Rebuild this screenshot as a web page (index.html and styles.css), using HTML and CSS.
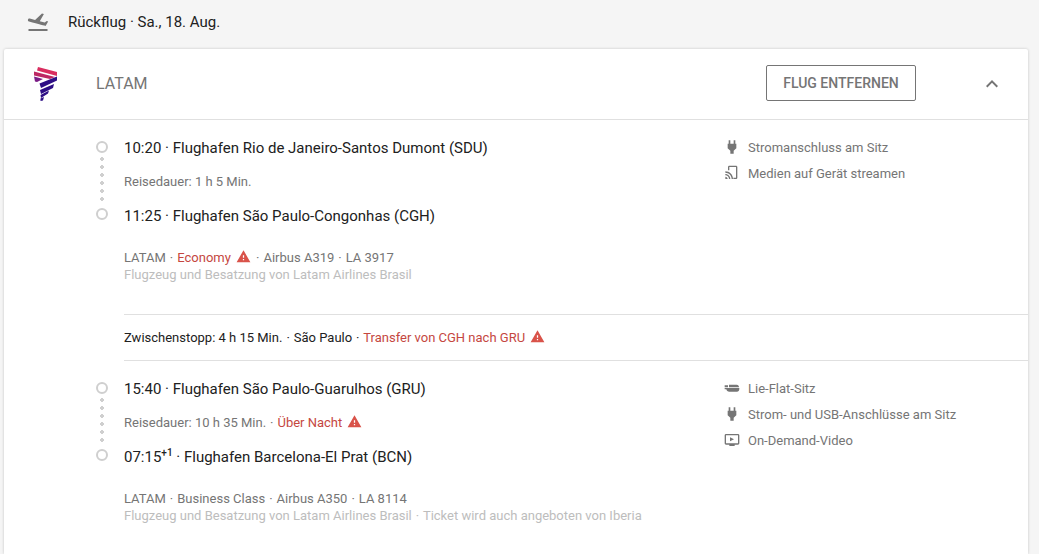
FILE: index.html
```html
<!DOCTYPE html>
<html lang="de">
<head>
    <meta charset="UTF-8">
    <meta name="viewport" content="width=device-width, initial-scale=1.0">
    <title>Rückflug</title>
    <link rel="stylesheet" href="styles.css">
</head>
<body>
    <div class="trip-head">
        <svg class="trip-icon" viewBox="0 0 24 24"><path d="M2.500 19h19v2h-19zM22.070 9.640c-.21-.8-1.040-1.280-1.840-1.060L14.920 10l-6.900-6.430-1.930.51 4.140 7.170-4.970 1.330-1.970-1.540-1.450.39 2.590 4.490s7.120-1.900 16.570-4.430c.81-.23 1.280-1.050 1.070-1.850z"/></svg>
        <span>Rückflug · Sa., 18. Aug.</span>
    </div>

    <div class="card">
        <div class="card-head">
            <svg class="logo" viewBox="0 0 23 34">
                <polygon fill="#d92d5f" points="4,0 23,5 23,9 3,3.500"/>
                <polygon fill="#bd2763" points="0,4.500 21,10 16,12 0,8.500"/>
                <polygon fill="#7a1c86" points="0,9.500 9,12 3,15 1,14.500"/>
                <polygon fill="#2d0e85" points="23,9.500 23,13.500 7,21 5.500,16.500"/>
                <polygon fill="#2d0e85" points="20,17 19,21 7,27 6,23"/>
                <polygon fill="#2d0e85" points="15,23.500 14,26.500 7,31 6.500,28"/>
                <polygon fill="#2d0e85" points="10,30 9,33.500 6.500,34 6.500,31.500"/>
            </svg>
            <span class="airline">LATAM</span>
            <button class="remove-btn">FLUG ENTFERNEN</button>
            <svg class="chevron" viewBox="0 0 24 24"><path d="M7.410 15.410 12 10.830l4.590 4.580L18 14l-6-6-6 6z"/></svg>
        </div>

        <div class="segment">
            <div class="timeline">
                <span class="stop"></span>
                <span class="dots"></span>
                <span class="stop"></span>
            </div>
            <div class="details">
                <div class="time-row">10:20 · Flughafen Rio de Janeiro-Santos Dumont (SDU)</div>
                <div class="duration-row">Reisedauer: 1 h 5 Min.</div>
                <div class="time-row">11:25 · Flughafen São Paulo-Congonhas (CGH)</div>
                <div class="info">
                    <div class="info-line">LATAM <span class="sep">·</span> <span class="warn">Economy</span> <svg class="warn-icon" viewBox="0 0 24 24"><path d="M1 21h22L12 2 1 21zm12-3h-2v-2h2v2zm0-4h-2v-4h2v4z"/></svg> <span class="sep">·</span> Airbus A319 <span class="sep">·</span> LA 3917</div>
                    <div class="info-line muted">Flugzeug und Besatzung von Latam Airlines Brasil</div>
                </div>
            </div>
            <ul class="amenities">
                <li>
                    <svg viewBox="0 0 24 24"><path d="M9.500 2v5h5V2h2.500v5h1.500v7l-4 3.500V22h-5v-4.500l-4-3.500V7H7V2z"/></svg>
                    Stromanschluss am Sitz
                </li>
                <li>
                    <svg viewBox="0 0 24 24"><path d="M2 17.500V21h3.500c0-2-1.500-3.500-3.500-3.500zm0-4v2c3 0 5.500 2.500 5.500 5.500h2c0-4.100-3.400-7.500-7.500-7.500zm0-4v2c5.200 0 9.500 4.300 9.500 9.500h2C13.500 14.600 8.400 9.500 2 9.500zM8 1C6.900 1 6 1.900 6 3v5h2V3h10v16h-4v2h4c1.100 0 2-.9 2-2V3c0-1.100-.9-2-2-2z"/></svg>
                    Medien auf Gerät streamen
                </li>
            </ul>
        </div>

        <div class="layover">
            Zwischenstopp: 4 h 15 Min. <span class="sep">·</span> São Paulo <span class="sep">·</span> <span class="warn">Transfer von CGH nach GRU</span> <svg class="warn-icon" viewBox="0 0 24 24"><path d="M1 21h22L12 2 1 21zm12-3h-2v-2h2v2zm0-4h-2v-4h2v4z"/></svg>
        </div>

        <div class="segment">
            <div class="timeline">
                <span class="stop"></span>
                <span class="dots"></span>
                <span class="stop"></span>
            </div>
            <div class="details">
                <div class="time-row">15:40 · Flughafen São Paulo-Guarulhos (GRU)</div>
                <div class="duration-row">Reisedauer: 10 h 35 Min. <span class="sep">·</span> <span class="warn">Über Nacht</span> <svg class="warn-icon" viewBox="0 0 24 24"><path d="M1 21h22L12 2 1 21zm12-3h-2v-2h2v2zm0-4h-2v-4h2v4z"/></svg></div>
                <div class="time-row">07:15<sup>+1</sup> · Flughafen Barcelona-El Prat (BCN)</div>
                <div class="info">
                    <div class="info-line">LATAM <span class="sep">·</span> Business Class <span class="sep">·</span> Airbus A350 <span class="sep">·</span> LA 8114</div>
                    <div class="info-line muted">Flugzeug und Besatzung von Latam Airlines Brasil <span class="sep">·</span> Ticket wird auch angeboten von Iberia</div>
                </div>
            </div>
            <ul class="amenities">
                <li>
                    <svg viewBox="0 0 24 24"><path d="M1 8h5v3H1zM7.500 7H19c2.200 0 3.500 1.500 3.500 4H7.500zM1 12h22v1.500c0 2.500-1.500 4-3.500 4H8c-2.500 0-4-1.500-4.500-3.500H1z"/></svg>
                    Lie-Flat-Sitz
                </li>
                <li>
                    <svg viewBox="0 0 24 24"><path d="M9.500 2v5h5V2h2.500v5h1.500v7l-4 3.500V22h-5v-4.500l-4-3.500V7H7V2z"/></svg>
                    Strom- und USB-Anschlüsse am Sitz
                </li>
                <li>
                    <svg viewBox="0 0 24 24"><path d="M21 3H3c-1.100 0-2 .9-2 2v12c0 1.100.9 2 2 2h5v2h8v-2h5c1.100 0 2-.9 2-2V5c0-1.100-.9-2-2-2zm0 14H3V5h18v12zM9 8v6l6-3z"/></svg>
                    On-Demand-Video
                </li>
            </ul>
        </div>
    </div>
</body>
</html>
```

FILE: styles.css
```css
html, body {
    height: 100%;
}

body {
    display: flex;
    flex-direction: column;
    font-family: 'Roboto', sans-serif;
    background-color: #f5f5f5;
    color: #212121;
    margin: 0;
    overflow: hidden;
}

.trip-head {
    display: flex;
    align-items: center;
    height: 44px;
    padding-left: 26px;
    font-size: 15px;
}

.trip-icon {
    width: 24px;
    height: 24px;
    margin-right: 18px;
    fill: #757575;
    transform: scaleX(-1); /* return flight points left */
}

.card {
    flex: 1;
    margin: 5px 11px 0 4px;
    background-color: #fff;
    border-radius: 2px 2px 0 0;
    box-shadow: 0 0 3px rgba(0, 0, 0, 0.2);
    overflow: hidden;
}

.card-head {
    display: flex;
    align-items: center;
    height: 70px;
    border-bottom: 1px solid #e0e0e0;
    padding: 0 24px 0 30px;
}

.logo {
    width: 23px;
    height: 34px;
    margin-right: 39px;
}

.airline {
    flex: 1;
    margin-bottom: 2px;
    font-size: 16px;
    color: #757575;
}

.remove-btn {
    width: 150px;
    height: 36px;
    margin: 0 64px 2px 0;
    background: none;
    border: 1px solid #757575;
    border-radius: 2px;
    color: #757575;
    font-family: inherit;
    font-size: 14px;
    font-weight: 500;
}

.chevron {
    width: 24px;
    height: 24px;
    fill: #757575;
}

.segment {
    display: flex;
    padding: 11px 0 31px 92px;
}

.timeline {
    display: flex;
    flex-direction: column;
    align-items: center;
    width: 12px;
    margin-right: 16px;
    padding-top: 10px;
}

.stop {
    width: 12px;
    height: 12px;
    box-sizing: border-box;
    border: 2px solid #cfcfcf;
    border-radius: 50%;
}

.dots {
    width: 4px;
    height: 48px;
    margin: 2px 0 5px;
    background-image: radial-gradient(circle, #cfcfcf 2px, transparent 2px);
    background-size: 4px 8px;
}

.details {
    flex: 1;
}

.time-row,
.duration-row {
    height: 34px;
    line-height: 34px;
}

.time-row {
    font-size: 15px;
}

.time-row sup {
    font-size: 10px;
    font-weight: 500;
    line-height: 0;
}

.duration-row {
    font-size: 13px;
    color: #757575;
}

.info {
    margin-top: 16px;
    font-size: 13px;
    color: #757575;
}

.info-line {
    height: 17px;
    line-height: 17px;
}

.muted {
    color: #bdbdbd;
}

.sep {
    margin: 0 0.75px;
}

.warn {
    color: #c5473f;
}

.warn-icon {
    width: 15px;
    height: 15px;
    margin: 0 1.5px;
    vertical-align: -2px;
    fill: #d9534a;
}

.amenities {
    width: 304px;
    margin: 3px 0 0;
    padding: 0;
    list-style: none;
}

.amenities li {
    display: flex;
    align-items: center;
    height: 26px;
    font-size: 13px;
    color: #757575;
}

.amenities svg {
    width: 16px;
    height: 16px;
    margin-right: 8px;
    fill: #757575;
}

.layover {
    height: 45px;
    margin-left: 120px;
    border-top: 1px solid #e0e0e0;
    border-bottom: 1px solid #e0e0e0;
    font-size: 13px;
    line-height: 45px;
}
```
